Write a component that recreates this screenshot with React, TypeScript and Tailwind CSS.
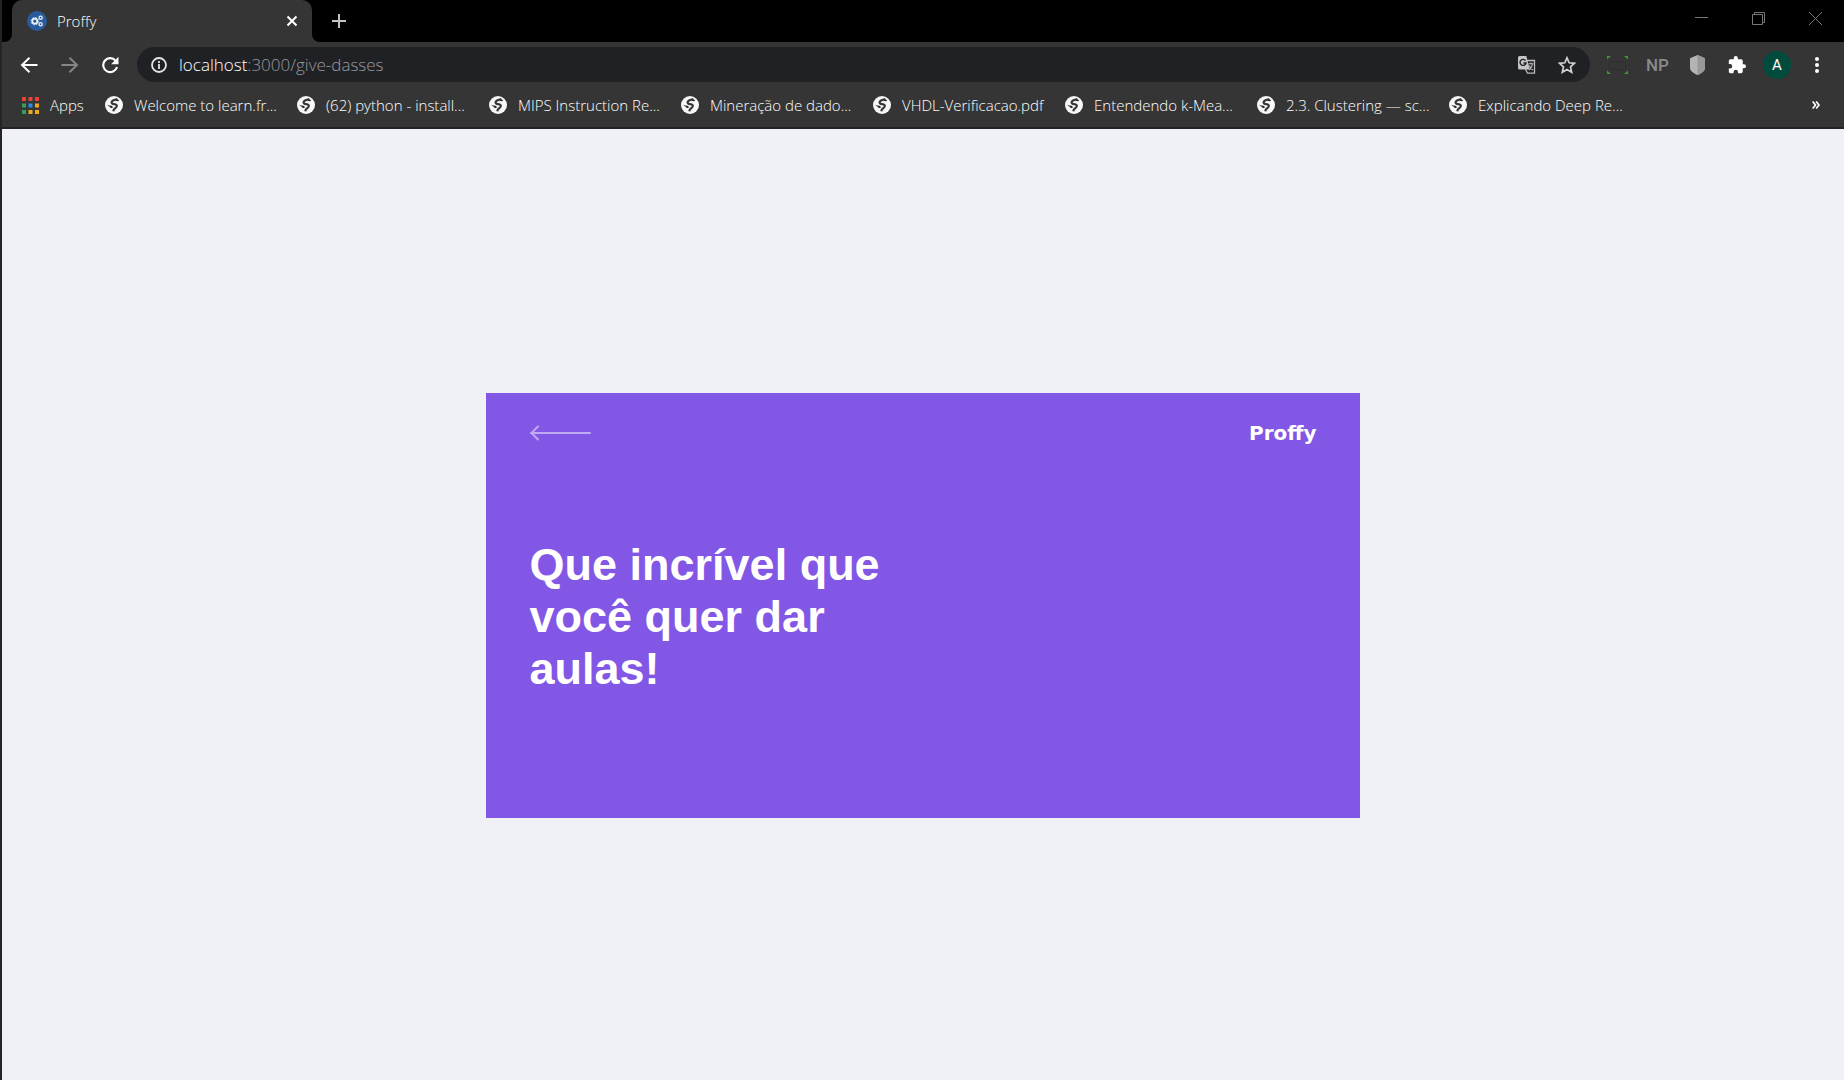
import React from "react";

const bookmarks = [
  "Welcome to learn.fr...",
  "(62) python - install...",
  "MIPS Instruction Re...",
  "Mineração de dado...",
  "VHDL-Verificacao.pdf",
  "Entendendo k-Mea...",
  "2.3. Clustering — sc...",
  "Explicando Deep Re...",
];

const appColors = [
  "#e8413a", "#e8413a", "#e8413a",
  "#34a058", "#2a8cf0", "#f0a818",
  "#34a058", "#f0a818", "#f0a818",
];

function Globe() {
  return (
    <svg viewBox="0 0 18 18" className="size-[18px] shrink-0" aria-hidden="true">
      <circle cx="9" cy="9" r="9" fill="#f8f8f8" />
      <path
        d="M12.200 3.400C9.500 3.600 7 4.600 6.600 6.300 6.400 7.800 8.500 8 10.200 8.300 12.200 8.700 12.300 10.600 10.900 11.600 9.500 12.400 8.600 13.400 8.200 15.300"
        fill="none"
        stroke="#353535"
        strokeWidth="2.200"
      />
      <path d="M2 8.800L4.500 9.500 7.200 9.800 8 11.400 6 12.200 4.500 10.800z" fill="#353535" />
      <path d="M11 2.200L14.300 4.200 12.500 5.600 10.500 4.600z" fill="#353535" />
    </svg>
  );
}

function TabStrip() {
  return (
    <div className="flex h-[42px] items-start bg-black pl-2.5">
      <div className="relative flex h-[42px] w-[300px] items-center rounded-t-[10px] bg-[#353535] pr-3.5 pl-[15px]">
        <svg viewBox="0 0 8 8" className="absolute bottom-0 -left-2 size-2" aria-hidden="true">
          <path d="M8 0v8H0c4.500 0 8-3.500 8-8z" fill="#353535" />
        </svg>
        <svg viewBox="0 0 8 8" className="absolute -right-2 bottom-0 size-2" aria-hidden="true">
          <path d="M0 0v8h8c-4.500 0-8-3.500-8-8z" fill="#353535" />
        </svg>
        <svg viewBox="0 0 20 20" className="size-5" fill="none" aria-hidden="true">
          <circle cx="10" cy="10" r="10" fill="#2a5b9c" />
          <g stroke="#e8f0fa">
            <circle cx="7.800" cy="10.200" r="2.500" strokeWidth="1.800" />
            <circle cx="7.800" cy="10.200" r="3.700" strokeWidth="1" strokeDasharray="1.400 1.500" />
            <circle cx="13.600" cy="6.700" r="1.600" strokeWidth="1.300" />
            <circle cx="13.600" cy="13.300" r="1.600" strokeWidth="1.300" />
          </g>
        </svg>
        <span className="ml-2.5 flex-1 text-[15px] leading-5 font-light text-white">Proffy</span>
        <button type="button" aria-label="Close tab" className="grid size-3 place-items-center">
          <svg viewBox="0 0 12 12" className="size-3" stroke="#fff" strokeWidth="2" aria-hidden="true">
            <path d="M1.500 1.500l9 9M10.500 1.500l-9 9" />
          </svg>
        </button>
      </div>
      <button type="button" aria-label="New tab" className="ml-[19px] grid h-[42px] w-4 place-items-center">
        <svg viewBox="0 0 16 16" className="size-4" stroke="#c4c4c4" strokeWidth="2" aria-hidden="true">
          <path d="M8 1v14M1 8h14" />
        </svg>
      </button>
      <div className="ml-auto flex gap-11 pt-3 pr-[22px]">
        <button type="button" aria-label="Minimize">
          <svg viewBox="0 0 13 13" className="size-[13px]" stroke="#777" aria-hidden="true">
            <path d="M0 5.500h13" />
          </svg>
        </button>
        <button type="button" aria-label="Restore">
          <svg viewBox="0 0 13 13" className="size-[13px]" fill="none" stroke="#777" aria-hidden="true">
            <path d="M.5 2.500h10v10H.5zM2.500 2.500v-2h10v10h-2" />
          </svg>
        </button>
        <button type="button" aria-label="Close window">
          <svg viewBox="0 0 13 13" className="size-[13px]" stroke="#777" aria-hidden="true">
            <path d="M0 0l13 13M13 0L0 13" />
          </svg>
        </button>
      </div>
    </div>
  );
}

function Toolbar() {
  return (
    <div className="flex h-[45px] items-center pl-[18px]">
      <button type="button" aria-label="Back">
        <svg viewBox="0 0 18 18" className="size-[18px]" fill="none" stroke="#fff" strokeWidth="2" aria-hidden="true">
          <path d="M17.500 9H2.500M9.500 1.700L2 9l7.500 7.300" />
        </svg>
      </button>
      <button type="button" aria-label="Forward" className="ml-[23px]">
        <svg viewBox="0 0 18 18" className="size-[18px]" fill="none" stroke="#868686" strokeWidth="2" aria-hidden="true">
          <path d="M.5 9h15M8.500 1.700L16 9l-7.500 7.300" />
        </svg>
      </button>
      <button type="button" aria-label="Reload" className="ml-[22px]">
        <svg viewBox="0 0 18 18" className="size-[18px]" aria-hidden="true">
          <path d="M14.600 4.600A7 7 0 1 0 16 11" fill="none" stroke="#fff" strokeWidth="2.200" />
          <path d="M17.500.8v7.400h-7.400z" fill="#fff" />
        </svg>
      </button>
      <div className="ml-[18px] flex h-[35px] flex-1 items-center rounded-full bg-[#202125] pr-3.5 pl-3.5">
        <svg viewBox="0 0 16 16" className="size-4" fill="none" stroke="#e4e4e4" aria-hidden="true">
          <circle cx="8" cy="8" r="7" strokeWidth="1.800" />
          <path d="M8 7v5M8 4v2" strokeWidth="1.800" />
        </svg>
        <div className="ml-3 flex-1 text-[17px] leading-6 font-light text-[#9a9a9d]">
          <span className="text-white">localhost</span>:3000/give-dasses
        </div>
        <button type="button" aria-label="Translate" className="mr-[22px]">
          <svg viewBox="0 0 18 18" className="size-[18px]" fill="none" aria-hidden="true">
            <path d="M7 4.500h9.500v12.700H9.500L7 12z" stroke="#bcbcbc" strokeWidth="1.300" />
            <path d="M10.500 7.700h5M13 6.500v1.200M11 14c2-1.500 3-3.500 3.500-6M11.300 9.500c.7 2 2 3.500 3.700 4.500" stroke="#bcbcbc" strokeWidth="1.100" />
            <path d="M1.500 0h6.800l3.500 13.500H1.500A1.500 1.500 0 0 1 0 12V1.500A1.500 1.500 0 0 1 1.500 0z" fill="#c4c4c4" />
            <path d="M7.500 4.600A3 3 0 1 0 8 7H5.500" stroke="#202125" strokeWidth="1.400" />
          </svg>
        </button>
        <button type="button" aria-label="Bookmark this page">
          <svg viewBox="0 0 18 18" className="size-[18px]" fill="none" stroke="#d0d0d0" strokeWidth="1.700" aria-hidden="true">
            <path d="M9 1.800l2.200 5 5.300.5-4 3.600 1.200 5.300L9 13.400l-4.700 2.800 1.200-5.300-4-3.600 5.300-.5z" />
          </svg>
        </button>
      </div>
      <div className="flex items-center pr-[25px] pl-[17px]">
        <button type="button" aria-label="Screen capture">
          <svg viewBox="0 0 21 20" className="h-5 w-[21px]" fill="#3d9a2c" aria-hidden="true">
            <path d="M0 1h4L0 4.500zM21 1h-4l4 3.500zM0 19h4l-4-3.500zM21 19h-4l4-3.500z" />
            <rect x="2.500" y="6.500" width="16" height="8" rx="1" fill="none" stroke="#2f2f2f" />
          </svg>
        </button>
        <button
          type="button"
          className="ml-[18px] w-[22px] font-['Roboto',sans-serif] text-[17px] leading-5 font-medium text-[#8b8b8b]"
        >
          NP
        </button>
        <button type="button" aria-label="Shield extension" className="ml-[22px]">
          <svg viewBox="0 0 15 20" className="h-5 w-[15px]" aria-hidden="true">
            <path d="M7.500 0L15 3.200V13c0 3-4 5.500-7.500 7C4 18.500 0 16 0 13V3.200z" fill="#b4b4b4" />
            <path d="M7.500 0L15 3.200V13c0 3-4 5.500-7.500 7z" fill="#989898" />
          </svg>
        </button>
        <button type="button" aria-label="Extensions" className="ml-[23px]">
          <svg viewBox="1 1 22 22" className="size-[18px]" fill="#fff" aria-hidden="true">
            <path d="M20.500 11H19V7c0-1.100-.9-2-2-2h-4V3.500a2.500 2.500 0 0 0-5 0V5H4c-1.100 0-2 .9-2 2v3.800h1.500a2.700 2.700 0 0 1 0 5.400H2V20c0 1.100.9 2 2 2h3.800v-1.500a2.700 2.700 0 0 1 5.400 0V22H17c1.100 0 2-.9 2-2v-4h1.500a2.500 2.500 0 0 0 0-5z" />
          </svg>
        </button>
        <button type="button" aria-label="Profile" className="ml-[17px] grid size-7 place-items-center rounded-full bg-[#014b3d] font-['Roboto',sans-serif] text-[15px] leading-5 text-white">
          A
        </button>
        <button type="button" aria-label="Menu" className="ml-6">
          <svg viewBox="0 0 4 18" className="h-[18px] w-1" fill="#fff" aria-hidden="true">
            <circle cx="2" cy="3" r="2" />
            <circle cx="2" cy="9" r="2" />
            <circle cx="2" cy="15" r="2" />
          </svg>
        </button>
      </div>
    </div>
  );
}

function BookmarksBar() {
  return (
    <nav aria-label="Bookmarks" className="flex h-[42px] items-center border-b-2 border-[#242222] pr-6 pb-1 pl-5 text-[15px] leading-5 font-light text-white">
      <a href="#apps" className="mr-[21px] flex w-[62px] shrink-0 items-center whitespace-nowrap">
        <svg viewBox="0 0 17 17" className="mr-[11px] size-[17px] shrink-0" aria-hidden="true">
          {appColors.map((color, i) => (
            <rect key={i} x={(i % 3) * 6.5} y={Math.floor(i / 3) * 6.5} width="4" height="4" fill={color} />
          ))}
        </svg>
        Apps
      </a>
      {bookmarks.map((title, i) => (
        <a key={i} href="#bookmark" className="flex w-[192px] items-center gap-[11px] whitespace-nowrap">
          <Globe />
          {title}
        </a>
      ))}
      <button type="button" aria-label="More bookmarks" className="ml-auto">
        <svg viewBox="0 0 8 8" className="size-2" fill="none" stroke="#fff" strokeWidth="1.700" aria-hidden="true">
          <path d="M.7.5L3.500 4 .7 7.500M4.200.5L7 4 4.200 7.500" />
        </svg>
      </button>
    </nav>
  );
}

export default function App() {
  return (
    <div className="flex min-h-screen flex-col border-l-2 border-[#252228] bg-[#f0f0f7] font-['Open_Sans','Noto_Sans',sans-serif]">
      <header className="bg-[#353535]">
        <TabStrip />
        <Toolbar />
        <BookmarksBar />
      </header>
      <main className="flex flex-1 items-center justify-center pt-0.5">
        <section className="w-[47.5%] min-w-[480px] bg-[#8257e5] px-11 pt-[26px] pb-[123px]">
          <div className="flex items-center justify-between">
            <a href="#home" aria-label="Back to home">
              <svg viewBox="0 0 61 16" className="h-4 w-[61px]" fill="none" stroke="#c0aaf3" strokeWidth="2" strokeLinecap="round" strokeLinejoin="round" aria-hidden="true">
                <path d="M60 8H1M8 1.500L1.500 8 8 14.500" />
              </svg>
            </a>
            <span className="font-['DejaVu_Sans',sans-serif] text-[20px] leading-7 font-bold text-white">Proffy</span>
          </div>
          <h1 className="mt-[92px] max-w-[400px] font-['Liberation_Sans',Arial,sans-serif] text-[45px] leading-[52px] font-bold text-white">
            Que incrível que você quer dar aulas!
          </h1>
        </section>
      </main>
    </div>
  );
}
